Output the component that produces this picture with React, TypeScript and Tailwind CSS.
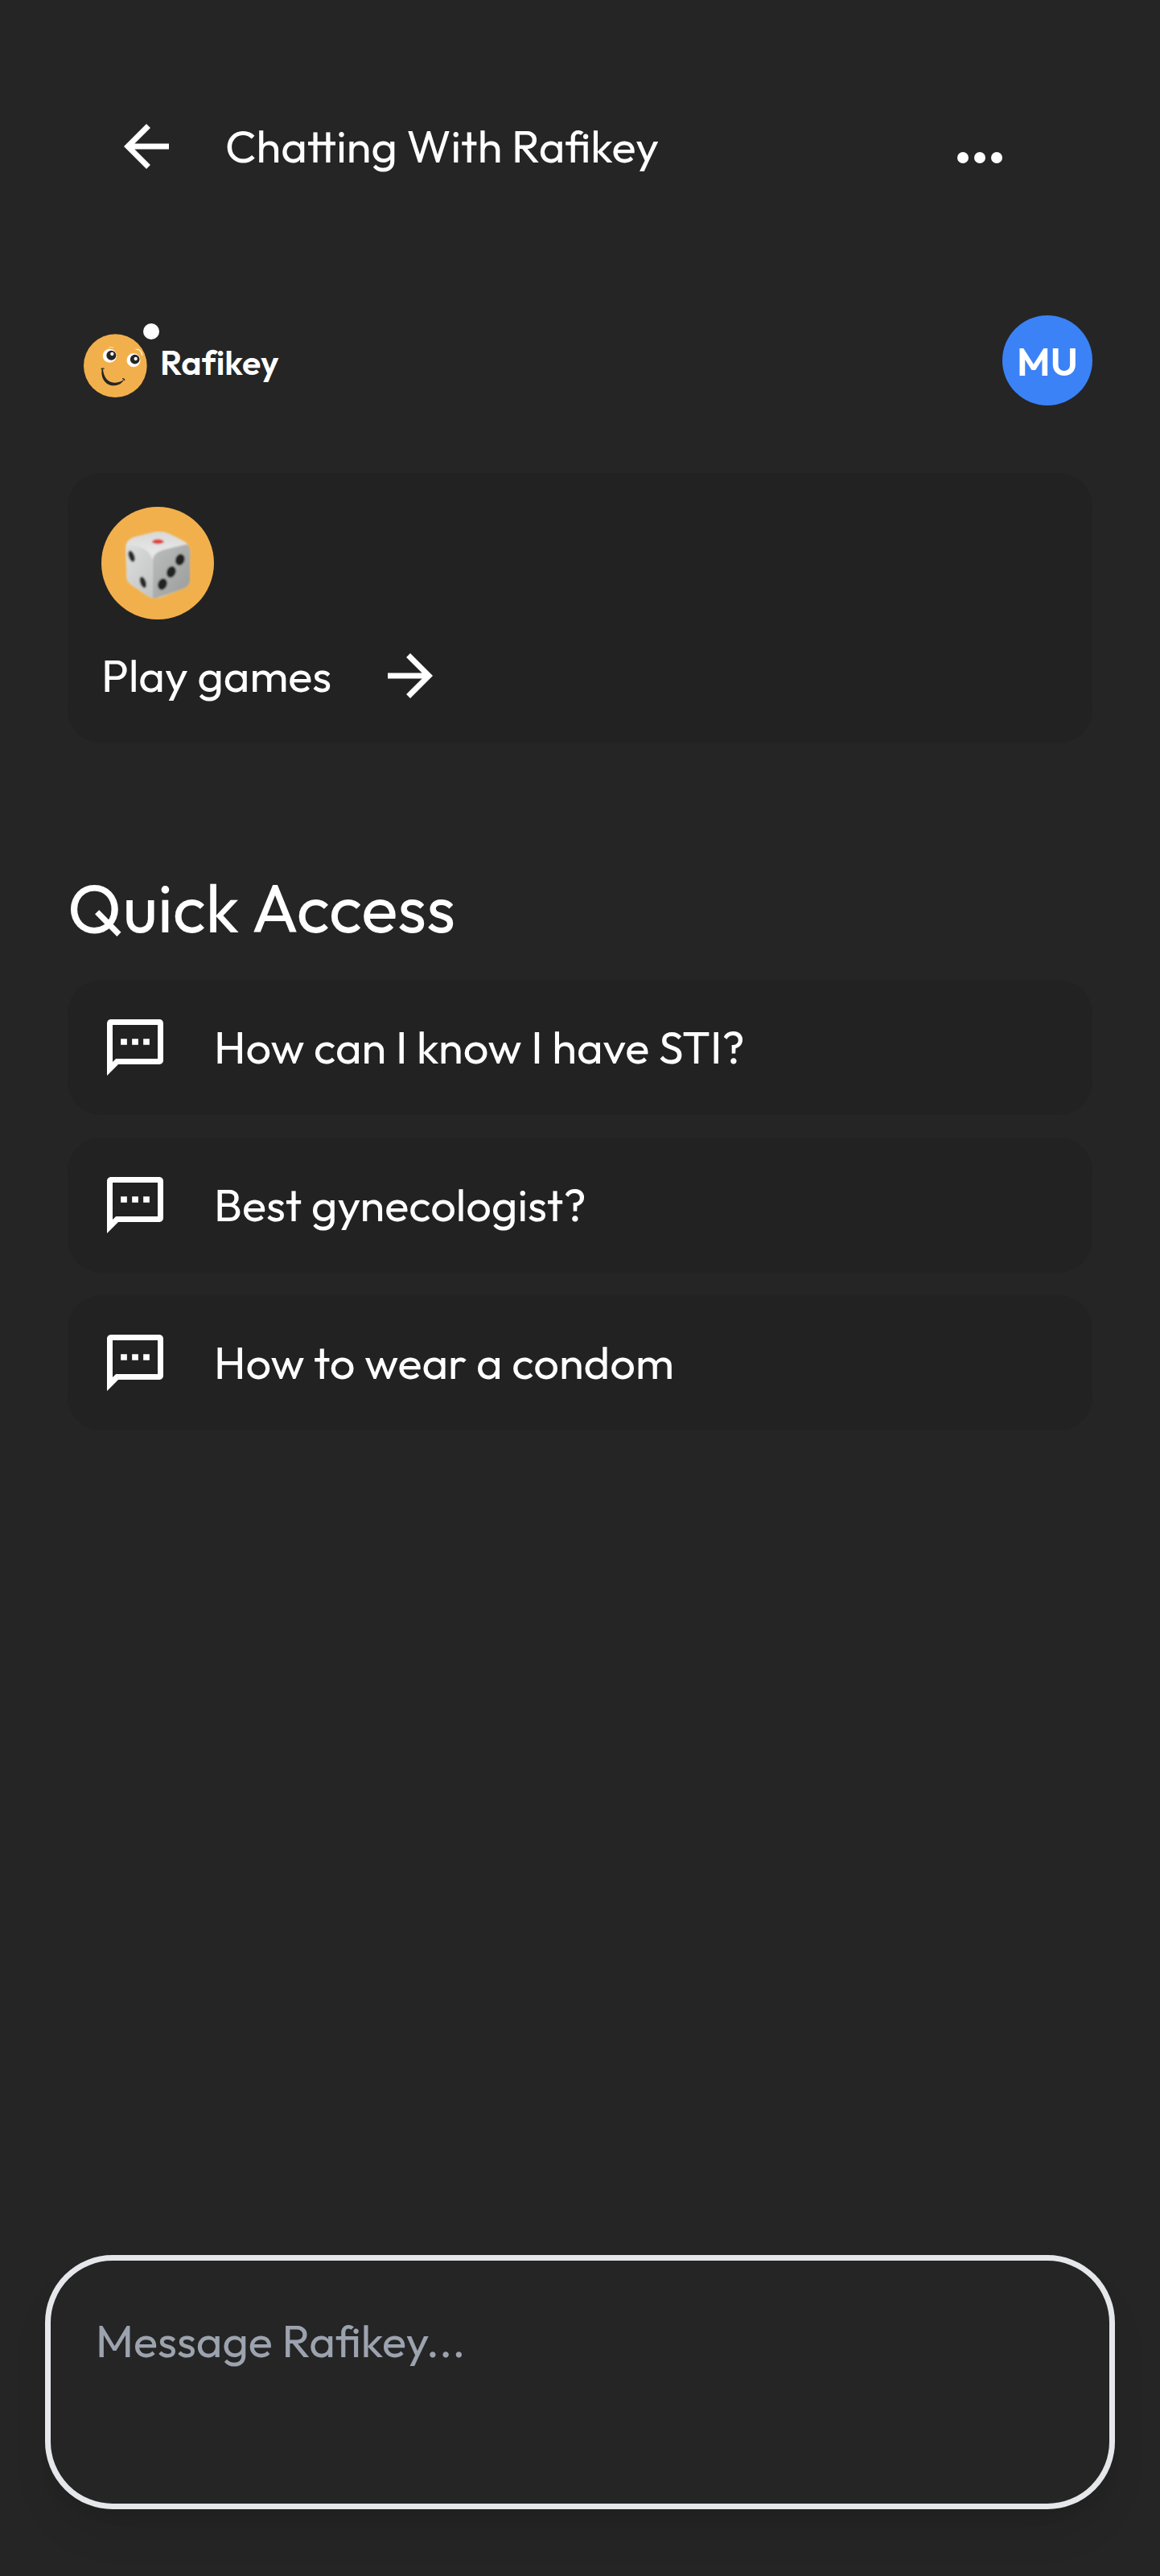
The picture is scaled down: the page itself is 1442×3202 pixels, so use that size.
import React from "react";

function ArrowIcon({ direction }: { direction: "left" | "right" }) {
  return (
    <svg viewBox="0 0 24 24" className="size-[84px] shrink-0" fill="currentColor" aria-hidden="true">
      {direction === "left" ? (
        <path d="M20 11H7.83l5.59-5.59L12 4l-8 8 8 8 1.41-1.41L7.83 13H20v-2z" />
      ) : (
        <path d="m12 4-1.41 1.41L16.17 11H4v2h12.17l-5.58 5.59L12 20l8-8z" />
      )}
    </svg>
  );
}

function ChatIcon() {
  return (
    <svg viewBox="0 0 24 24" className="size-[84px] shrink-0" fill="currentColor" aria-hidden="true">
      <path
        fillRule="evenodd"
        d="M3.5 2h17C21.4 2 22 2.6 22 3.5v13c0 .9-.6 1.5-1.5 1.5H6l-4 4V3.500C2 2.600 2.600 2 3.500 2zM4 4v13.170L5.170 16H20V4z"
      />
      <path d="M6.900 8.900h2.200v2.200H6.900zM10.900 8.900h2.200v2.200h-2.200zM14.900 8.900h2.200v2.200h-2.200z" />
    </svg>
  );
}

function FaceLogo() {
  return (
    <svg viewBox="72 66 285 276" className="h-[92px] w-[95px] shrink-0" aria-hidden="true">
      <circle cx="190" cy="224" r="118" fill="#f2b04c" />
      <circle cx="324" cy="96" r="30" fill="#fff" />
      <circle cx="169" cy="187" r="25.500" fill="#fff" />
      <circle cx="175" cy="185" r="18" fill="#252525" />
      <circle cx="178" cy="180" r="6.500" fill="#fff" />
      <circle cx="258" cy="203" r="25.500" fill="#fff" />
      <circle cx="263" cy="200" r="17.500" fill="#252525" />
      <circle cx="266" cy="198" r="6.500" fill="#fff" />
      <path d="M165 158q8-8 17-2" fill="none" stroke="#fbe3bd" strokeWidth="3" strokeLinecap="round" />
      <path d="M267 162q20 1 23 22" fill="none" stroke="#fff" strokeWidth="3.500" strokeLinecap="round" />
      <path d="M140 236C134 272 156 299 186 298C204 297 217 288 223 274C213 284 200 288 186 287C164 286 146 268 144 236Z" fill="#252525" />
      <path d="M138 236q5-4 9-1M218 272q5 0 6 5" fill="none" stroke="#252525" strokeWidth="4" strokeLinecap="round" />
    </svg>
  );
}

function Dice() {
  return (
    <svg viewBox="252 272 248 254" className="h-[84px] w-[82px]" aria-hidden="true">
      <defs>
        <linearGradient id="top" x1="0" y1="0" x2="0" y2="1">
          <stop offset="0" stopColor="#d9d9d9" />
          <stop offset="1" stopColor="#e8e8e8" />
        </linearGradient>
        <linearGradient id="left" x1="0" y1="0" x2="1" y2="1">
          <stop offset="0" stopColor="#dcdedd" />
          <stop offset="1" stopColor="#c2c4c3" />
        </linearGradient>
        <linearGradient id="right" x1="0" y1="0" x2="1" y2="1">
          <stop offset="0" stopColor="#bcbebd" />
          <stop offset="1" stopColor="#9a9c9b" />
        </linearGradient>
        <filter id="soft" x="-5%" y="-5%" width="110%" height="110%">
          <feGaussianBlur stdDeviation="3" />
        </filter>
      </defs>
      <g filter="url(#soft)">
        <path d="M256 330Q259 305 290 295L360 277Q392 270 420 283L470 308Q497 322 498 345L497 462Q494 480 470 490L385 522Q362 529 340 518L282 478Q261 465 259 445Z" fill="#e3e4e3" />
        <path d="M256 328Q266 322 292 328Q346 340 355 380L358 524Q345 522 335 514L282 478Q261 465 259 445Z" fill="url(#left)" />
        <path d="M357 382Q362 354 395 344L478 318Q497 325 498 345L497 462Q494 480 470 490L385 520Q368 527 358 524Z" fill="url(#right)" />
        <path d="M260 318Q268 302 290 295L360 277Q392 270 420 283L470 308Q482 314 486 322L400 342Q368 350 357 362Q345 340 300 329Z" fill="url(#top)" />
        <ellipse cx="377" cy="312" rx="22" ry="9" fill="#dd4540" />
        <ellipse cx="278" cy="367" rx="11" ry="22" transform="rotate(-20 278 367)" fill="#2b2b2b" />
        <ellipse cx="321" cy="465" rx="11" ry="22" transform="rotate(-20 321 465)" fill="#2b2b2b" />
        <ellipse cx="460" cy="380" rx="17" ry="22" transform="rotate(20 460 380)" fill="#222" />
        <ellipse cx="427" cy="426" rx="17" ry="22" transform="rotate(20 427 426)" fill="#222" />
        <ellipse cx="394" cy="472" rx="17" ry="22" transform="rotate(20 394 472)" fill="#222" />
      </g>
    </svg>
  );
}

const questions = ["How can I know I have STI?", "Best gynecologist?", "How to wear a condom"];

export default function App() {
  return (
    <div className="flex min-h-screen flex-col bg-[#252525] font-['Outfit','Lato',sans-serif] text-[56px] leading-[84px] text-white">
      <header className="flex items-center justify-between pt-[140px] pr-[196px] pl-[140px]">
        <div className="flex items-center gap-14">
          <button type="button" aria-label="Back" className="flex">
            <ArrowIcon direction="left" />
          </button>
          <h1>Chatting With Rafikey</h1>
        </div>
        <button type="button" aria-label="More options" className="flex pt-7">
          <svg viewBox="0 0 56 14" className="h-[14px] w-14" fill="currentColor" aria-hidden="true">
            <circle cx="7" cy="7" r="7" />
            <circle cx="28" cy="7" r="7" />
            <circle cx="49" cy="7" r="7" />
          </svg>
        </button>
      </header>

      <main className="flex flex-col px-[84px] pt-[168px]">
        <div className="flex items-center justify-between pl-5">
          <div className="flex items-center">
            <FaceLogo />
            <span className="pt-1 text-[43px] font-semibold [font-variant-ligatures:none]">Rafikey</span>
          </div>
          <div className="flex size-28 items-center justify-center rounded-full bg-[#3b82f6] pt-0.5 text-[49px] font-semibold">MU</div>
        </div>

        <section className="mt-[84px] flex flex-col items-start gap-7 rounded-[42px] bg-[#222222] p-[42px]">
          <div className="flex size-[140px] items-center justify-center rounded-full bg-[#f2b04c] pt-1">
            <Dice />
          </div>
          <button type="button" className="flex items-center gap-14">
            Play games
            <ArrowIcon direction="right" />
          </button>
        </section>

        <h2 className="mt-[148px] text-[84px] leading-[112px]">Quick Access</h2>
        <ul className="mt-[34px] flex flex-col gap-7">
          {questions.map((question) => (
            <li key={question}>
              <button type="button" className="flex w-full items-center gap-14 rounded-[42px] bg-[#222222] p-[42px] text-left">
                <ChatIcon />
                {question}
              </button>
            </li>
          ))}
        </ul>
      </main>

      <footer className="mt-auto px-14 pb-[83px]">
        <textarea
          aria-label="Message Rafikey"
          placeholder="Message Rafikey..."
          className="block h-[316px] w-full resize-none rounded-[84px] border-[7px] border-gray-200 bg-[#252525] px-14 pt-[58px] pb-14 shadow-[0_35px_52px_-10px_rgba(0,0,0,0.1),0_14px_21px_-14px_rgba(0,0,0,0.1)] outline-none placeholder:text-[#9ca3af]"
        />
      </footer>
    </div>
  );
}
